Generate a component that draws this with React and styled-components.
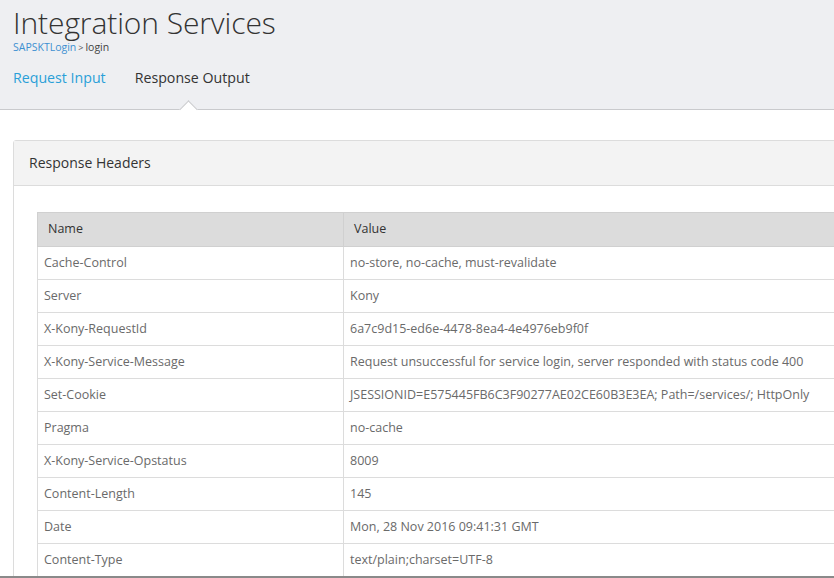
import React from 'react';
import styled, { createGlobalStyle } from 'styled-components';

const GlobalStyle = createGlobalStyle`
  html, body {
    margin: 0;
    padding: 0;
    overflow: hidden;
    background: #fff;
    font-family: "Open Sans", "Noto Sans", sans-serif;
  }
`

const headers = [
  ['Cache-Control', 'no-store, no-cache, must-revalidate'],
  ['Server', 'Kony'],
  ['X-Kony-RequestId', '6a7c9d15-ed6e-4478-8ea4-4e4976eb9f0f'],
  ['X-Kony-Service-Message', 'Request unsuccessful for service login, server responded with status code 400'],
  ['Set-Cookie', 'JSESSIONID=E575445FB6C3F90277AE02CE60B3E3EA; Path=/services/; HttpOnly'],
  ['Pragma', 'no-cache'],
  ['X-Kony-Service-Opstatus', '8009'],
  ['Content-Length', '145'],
  ['Date', 'Mon, 28 Nov 2016 09:41:31 GMT'],
  ['Content-Type', 'text/plain;charset=UTF-8'],
]

function App(){
  return (
    <Page>
      <GlobalStyle />
      <Header>
        <Title>Integration Services</Title>
        <Crumbs>
          <CrumbLink>SAPSKTLogin</CrumbLink>
          <CrumbSep>&gt;</CrumbSep>
          login
        </Crumbs>
        <Tabs>
          <Tab>Request Input</Tab>
          <Tab $active>Response Output</Tab>
        </Tabs>
      </Header>

      <Content>
        <Panel>
          <PanelHead>Response Headers</PanelHead>
          <PanelBody>
            <Table>
              <colgroup>
                <col style={{width: '306px'}} />
                <col />
              </colgroup>
              <thead>
                <tr>
                  <Th>Name</Th>
                  <Th>Value</Th>
                </tr>
              </thead>
              <tbody>
                {headers.map(([name, value]) => (
                  <tr key={name}>
                    <Td>{name}</Td>
                    <Td>{value}</Td>
                  </tr>
                ))}
              </tbody>
            </Table>
          </PanelBody>
        </Panel>
      </Content>
      <ScrollBar />
    </Page>
  )
}

export default App

const Page = styled.div`
  width: 834px;
  height: 578px;
  overflow: hidden;
  position: relative;
`

const Header = styled.div`
  background: #eeeff2;
  border-bottom: 1px solid #c9cacd;
  padding: 6px 0 0 13px;
  box-sizing: border-box;
  height: 110px;
`

const Title = styled.h1`
  margin: 0;
  font-family: "Open Sans", sans-serif;
  font-weight: 300;
  font-size: 30px;
  line-height: 34px;
  color: #333;
  letter-spacing: -0.1px;
`

const Crumbs = styled.div`
  font-size: 10.5px;
  line-height: 11px;
  margin-top: 2px;
  color: #444;
`

const CrumbLink = styled.span`
  color: #3d8fd1;
`

const CrumbSep = styled.span`
  font-size: 9px;
  color: #555;
  margin: 0 2px;
`

const Tabs = styled.div`
  display: flex;
  gap: 29px;
  margin-top: 15px;
`

const Tab = styled.div`
  position: relative;
  font-size: 14.2px;
  line-height: 20px;
  color: ${p => p.$active ? '#333' : '#2a9fd8'};

  ${p => p.$active && `
    &::after {
      content: "";
      position: absolute;
      left: 47px;
      top: 35px;
      width: 12px;
      height: 12px;
      background: #fff;
      border-left: 1px solid #c9cacd;
      border-top: 1px solid #c9cacd;
      transform: rotate(45deg);
    }
  `}
`

const Content = styled.div`
  padding: 30px 0 0 13px;
`

const Panel = styled.div`
  width: 1100px;
  border: 1px solid #dcdcdc;
  border-radius: 3px;
  background: #fff;
`

const PanelHead = styled.div`
  background: #f3f3f3;
  border-bottom: 1px solid #dcdcdc;
  padding: 0 0 2px 15px;
  box-sizing: border-box;
  height: 45px;
  display: flex;
  align-items: center;
  font-size: 14px;
  color: #333;
`

const PanelBody = styled.div`
  padding: 26px 23px;
`

const Table = styled.table`
  border-collapse: collapse;
  table-layout: fixed;
  width: 960px;
  font-size: 12.5px;
`

const Th = styled.th`
  background: #dcdcdc;
  border: 1px solid #d0d0d0;
  height: 31px;
  padding: 0 10px 2px;
  text-align: left;
  font-weight: 400;
  color: #333;
`

const Td = styled.td`
  border: 1px solid #dcdcdc;
  height: 30px;
  padding: 0 6px 2px;
  color: #6a6a6a;
  white-space: nowrap;
  overflow: hidden;
`

const ScrollBar = styled.div`
  position: absolute;
  left: 0;
  right: 0;
  bottom: 0;
  height: 2px;
  background: #8a8a8a;
`
